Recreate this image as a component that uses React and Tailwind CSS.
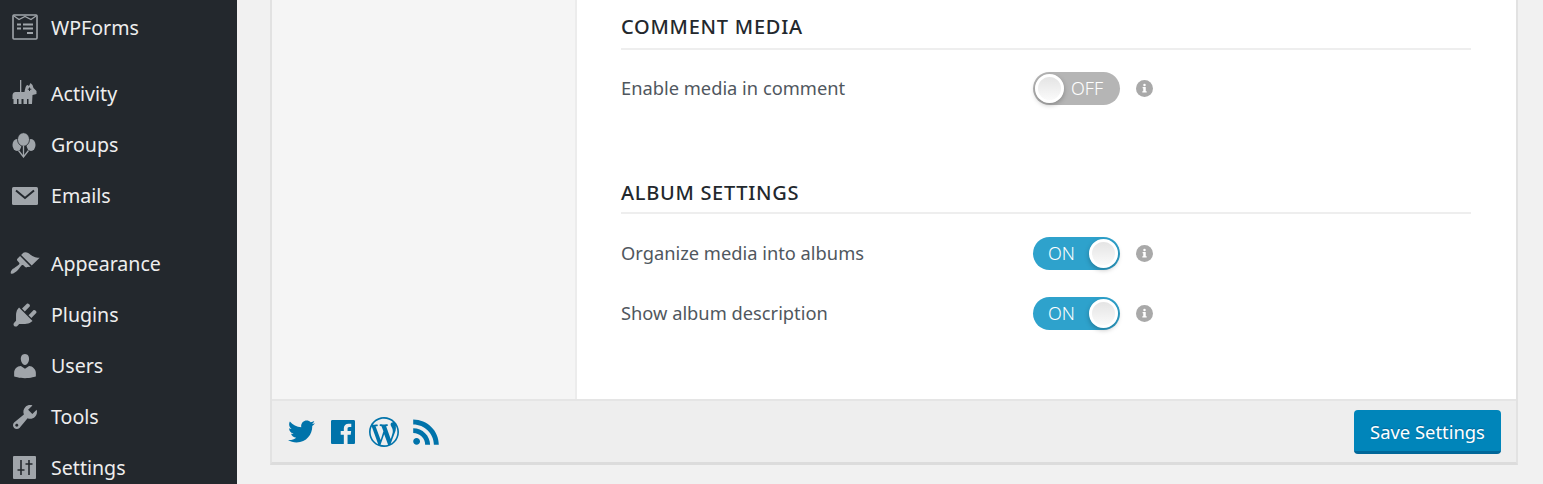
import React from 'react';
import { FaTwitter } from 'react-icons/fa';

const Dash = ({ d }) => (
    <svg viewBox="0 0 20 20" className="w-[30px] h-[30px] fill-[#a0a5aa]">
        <path d={d} />
    </svg>
);

const FormsIcon = () => (
    <svg viewBox="0 0 26 26" className="w-[26px] h-[26px] mb-[2px]">
        <rect x="1" y="1" width="24" height="24" rx="1" fill="none" stroke="#a0a5aa" strokeWidth="1.6" />
        <path d="M2 2l5 3.500 6-3 6 3 5-3.500" fill="none" stroke="#a0a5aa" strokeWidth="1.300" />
        <path d="M5 9.500h4v2H5zM11 9.500h10v2H11zM5 13.500h4v2H5zM11 13.500h10v2H11zM15 18h6v2h-6z" fill="#a0a5aa" />
    </svg>
);

const PonyIcon = () => (
    <svg viewBox="1.500 0 26 26" className="w-[26px] h-[26px] mb-[4px]">
        <path d="M9.500 1h1.300v13H9.500z" fill="#a0a5aa" />
        <path d="M2 16c.3-2 1.500-3 3-3h9c.6-2.500 1.200-7 3-7l1.500 1L20 4l2 2 1 3 3 3v3l-4 1-.5 9H18v-5h-1.500v5H13v-5h-2v5H8v-5H6.500v5H3v-5H2z" fill="#a0a5aa" />
        <path d="M19 8.500v3.500M17.300 10.200h3.500" fill="none" stroke="#23282d" strokeWidth="1" />
    </svg>
);

const BalloonsIcon = () => (
    <svg viewBox="1.500 0 26 26" className="w-[26px] h-[26px]">
        <ellipse cx="6.500" cy="13" rx="4.500" ry="6" fill="#a0a5aa" />
        <ellipse cx="20.500" cy="13" rx="4.500" ry="6" fill="#a0a5aa" />
        <ellipse cx="13" cy="7.500" rx="6" ry="6.800" fill="#a0a5aa" stroke="#23282d" strokeWidth="0.8" />
        <path d="M13 14v11M8 18.500l5 6.500 5-6.500" fill="none" stroke="#a0a5aa" strokeWidth="1.300" />
    </svg>
);

const MailIcon = () => (
    <svg viewBox="0 0 26 18" className="w-[26px] h-[18px]">
        <rect width="26" height="18" rx="1.500" fill="#a0a5aa" />
        <path d="M4 3.500l9 7.500 9-7.500" fill="none" stroke="#23282d" strokeWidth="2" />
    </svg>
);

const SlidersIcon = () => (
    <svg viewBox="0 0 23 23" className="w-[23px] h-[23px]">
        <rect width="23" height="23" rx="1" fill="#a0a5aa" />
        <path d="M8 4v15M4.500 14h7M16 4v15M12.500 8h7" fill="none" stroke="#23282d" strokeWidth="1.600" />
    </svg>
);

const items = [
    { label: 'Appearance', icon: <Dash d="M14.48 11.06L7.41 3.99l1.5-1.5c.5-.56 2.3-.47 3.51.32 1.21.8 1.43 1.28 2.91 2.1 1.18.64 2.45 1.26 4.45.85zm-.71.71L6.7 4.7 4.93 6.47c-.39.39-.39 1.02 0 1.41l1.06 1.06c.39.39.39 1.03 0 1.42-.6.6-1.43 1.11-2.21 1.69-.35.26-.7.53-1.01.84C1.43 13.23 0 15.2.6 16.4c1.2.6 3.17-.83 4.51-2.16.31-.31.58-.66.85-1.01.57-.78 1.08-1.61 1.69-2.21.39-.39 1.02-.39 1.41 0l1.06 1.06c.39.39 1.02.39 1.41 0z" /> },
    { label: 'Plugins', icon: <Dash d="M13.11 4.36L9.87 7.6 8 5.73l3.24-3.24c.35-.34 1.05-.2 1.56.32.52.51.66 1.21.31 1.55zm-8 1.77l.91-1.12 9.01 9.01-1.19.84c-.71.71-2.63 1.16-3.82 1.16H6.14L4.9 17.26c-.59.59-1.54.59-2.12 0-.59-.58-.59-1.53 0-2.12l1.24-1.24v-3.88c0-1.13.4-3.19 1.09-3.89zm7.26 3.97l3.24-3.24c.34-.35 1.04-.21 1.55.31.52.51.66 1.21.31 1.55l-3.24 3.25z" /> },
    { label: 'Users', icon: <Dash d="M10 9.25c-2.27 0-2.73-3.44-2.73-3.44C7 4.02 7.82 2 9.97 2c2.16 0 2.98 2.02 2.71 3.81 0 0-.41 3.44-2.68 3.44zm0 2.57L12.72 10c2.39 0 4.52 2.33 4.52 4.53v2.49s-3.65 1.13-7.24 1.13c-3.65 0-7.24-1.13-7.24-1.13v-2.49c0-2.25 1.94-4.48 4.47-4.48z" /> },
    { label: 'Tools', icon: <Dash d="M16.68 9.77c-1.34 1.34-3.3 1.67-4.95.99l-5.41 6.52c-.99.99-2.59.99-3.58 0s-.99-2.59 0-3.57l6.52-5.42c-.68-1.65-.35-3.61.99-4.95 1.28-1.28 3.12-1.62 4.72-1.06l-2.89 2.89 2.82 2.82 2.86-2.87c.53 1.58.18 3.39-1.08 4.65zM3.81 16.21c.4.39 1.04.39 1.43 0 .4-.4.4-1.04 0-1.43-.39-.4-1.03-.4-1.43 0-.39.39-.39 1.03 0 1.43z" /> },
    { label: 'Settings', icon: <SlidersIcon /> },
];

const MenuItem = ({ label, icon }) => (
    <div className="h-[51px] shrink-0 flex items-center">
        <div className="w-[51px] pr-[2px] flex justify-center">{icon}</div>
        <span>{label}</span>
    </div>
);

const Toggle = ({ on }) => (
    <div className={`relative w-[87px] h-[33px] rounded-full flex items-center text-white text-[18px] font-light ${on ? 'bg-[#2ea2cc] pl-[15px]' : 'bg-[#b5b5b5] pl-[38px]'}`}>
        <span>{on ? 'ON' : 'OFF'}</span>
        <span className={`absolute top-[2px] w-[29px] h-[29px] rounded-full bg-gradient-to-b from-[#e4e4e4] to-[#fafafa] shadow-[0_2px_5px_rgba(0,0,0,0.25)] border-[3px] border-white ${on ? 'right-[2px]' : 'left-[2px]'}`}></span>
    </div>
);

const Info = () => (
    <span className="ml-[16px] mb-[1px] w-[17px] h-[17px] rounded-full bg-[#a9a9a9] flex items-center justify-center">
        <svg viewBox="0 0 8 14" className="w-[5px] h-[10px] fill-white">
            <circle cx="4" cy="2" r="2" />
            <path d="M1 5.500h5V12h1.500v2H.5v-2H2V7.500H1z" />
        </svg>
    </span>
);

const Row = ({ label, on, className }) => (
    <div className={`flex items-center h-[33px] ${className}`}>
        <span className="w-[412px] pb-[2px]">{label}</span>
        <Toggle on={on} />
        <Info />
    </div>
);

const App = () => {
    return (
        <div className="h-[484px] w-[1543px] overflow-hidden flex bg-[#f1f1f1] font-['Noto_Sans','Open_Sans',sans-serif]">
            {/* Admin menu */}
            <div className="w-[237px] shrink-0 bg-[#23282d] text-[#eeeeee] text-[19.6px] flex flex-col pt-[2px]">
                <MenuItem label="WPForms" icon={<FormsIcon />} />
                <div className="h-[15px] shrink-0"></div>
                <MenuItem label="Activity" icon={<PonyIcon />} />
                <MenuItem label="Groups" icon={<BalloonsIcon />} />
                <MenuItem label="Emails" icon={<MailIcon />} />
                <div className="h-[17px] shrink-0"></div>
                {items.map((item) => (
                    <MenuItem key={item.label} label={item.label} icon={item.icon} />
                ))}
            </div>

            {/* Settings panel */}
            <div className="flex-1 pl-[33px] pr-[25px]">
                <div className="h-[465px] border-x-2 border-b-[3px] border-[#e2e2e2] border-b-[#dcdcdc] bg-white flex flex-col">
                    <div className="h-[399px] flex shrink-0">
                        <div className="w-[305px] bg-[#f5f5f5] border-r-2 border-[#ececec] shrink-0"></div>
                        <div className="pl-[44px] w-[894px] text-[#50575e] text-[18.3px]">
                            <h2 className="h-[50px] border-b-2 border-[#eeeeee] flex items-center pt-[6px] text-[20px] font-medium tracking-[0.75px] text-[#23282d]">COMMENT MEDIA</h2>
                            <Row label="Enable media in comment" className="mt-[22px]" />
                            <h2 className="mt-[68px] h-[41px] border-b-2 border-[#eeeeee] flex items-center text-[20px] font-medium tracking-[0.7px] text-[#23282d]">ALBUM SETTINGS</h2>
                            <Row label="Organize media into albums" on className="mt-[23px]" />
                            <Row label="Show album description" on className="mt-[27px]" />
                        </div>
                    </div>
                    <div className="flex-1 bg-[#eeeeee] border-t-2 border-[#e5e5e5] flex items-center justify-between pl-[16px] pr-[15px]">
                        <div className="flex items-center text-[#0073aa]">
                            <FaTwitter className="w-[27px] h-[27px]" />
                            <svg viewBox="0 0 20 20" className="w-[30px] h-[30px] ml-[13px] fill-current">
                                <path d="M2.89 2h14.23c.49 0 .88.39.88.88v14.24c0 .48-.39.88-.88.88h-4.08v-6.2h2.08l.31-2.41h-2.39V7.85c0-.7.2-1.18 1.2-1.18h1.28V4.51c-.22-.03-.98-.09-1.86-.09-1.85 0-3.11 1.12-3.11 3.18v1.78H8.46v2.41h2.09V18H2.89c-.49 0-.89-.4-.89-.88V2.88c0-.49.4-.88.89-.88z" />
                            </svg>
                            <svg viewBox="0 0 20 20" className="w-[30px] h-[30px] ml-[11px] fill-current">
                                <path d="M20 10c0-5.51-4.49-10-10-10C4.48 0 0 4.49 0 10c0 5.52 4.48 10 10 10 5.51 0 10-4.48 10-10zM7.78 15.37L4.37 6.22c.55-.02 1.17-.08 1.17-.08.5-.06.44-1.13-.06-1.11 0 0-1.45.11-2.37.11-.18 0-.37 0-.58-.01C4.12 2.69 6.87 1.11 10 1.11c2.33 0 4.45.87 6.05 2.34-.68-.11-1.65.39-1.65 1.58 0 .74.45 1.36.9 2.1.35.61.55 1.36.55 2.46 0 1.49-1.4 5-1.4 5l-3.03-8.37c.54-.02.82-.17.82-.17.5-.05.44-1.25-.06-1.22 0 0-1.44.12-2.38.12-.87 0-2.33-.12-2.33-.12-.5-.03-.56 1.2-.06 1.22l.92.08 1.26 3.41zM17.41 10c.24-.64.74-1.87.43-4.25.7 1.29 1.05 2.71 1.05 4.25 0 3.29-1.73 6.24-4.4 7.78.97-2.59 1.94-5.2 2.92-7.78zM6.1 18.09C3.12 16.65 1.11 13.53 1.11 10c0-1.3.23-2.48.72-3.59C3.25 10.3 4.67 14.2 6.1 18.09zm4.03-6.63l2.58 6.98c-.86.29-1.76.45-2.71.45-.79 0-1.57-.11-2.29-.33.81-2.38 1.62-4.74 2.42-7.1z" />
                            </svg>
                            <svg viewBox="0 0 20 20" className="w-[32px] h-[32px] ml-[11px] fill-current">
                                <path d="M14.92 18H18C18 9.32 10.82 2.25 2 2.25v3.02c7.12 0 12.92 5.71 12.92 12.73zm-5.44 0h3.08C12.56 12.27 7.82 7.6 2 7.6v3.02c2 0 3.87.77 5.29 2.16C8.7 14.17 9.48 16.03 9.48 18zm-5.35-.02c1.17 0 2.13-.93 2.13-2.09 0-1.15-.96-2.09-2.13-2.09-1.18 0-2.13.94-2.13 2.09 0 1.16.95 2.09 2.13 2.09z" />
                            </svg>
                        </div>
                        <button className="w-[147px] h-[44px] rounded-[4px] bg-[#0085ba] border-b-[3px] border-[#006799] text-white text-[18.4px] pt-[3px] [text-shadow:0_-1px_1px_#006799]">
                            Save Settings
                        </button>
                    </div>
                </div>
            </div>
        </div>
    );
};

export default App;
